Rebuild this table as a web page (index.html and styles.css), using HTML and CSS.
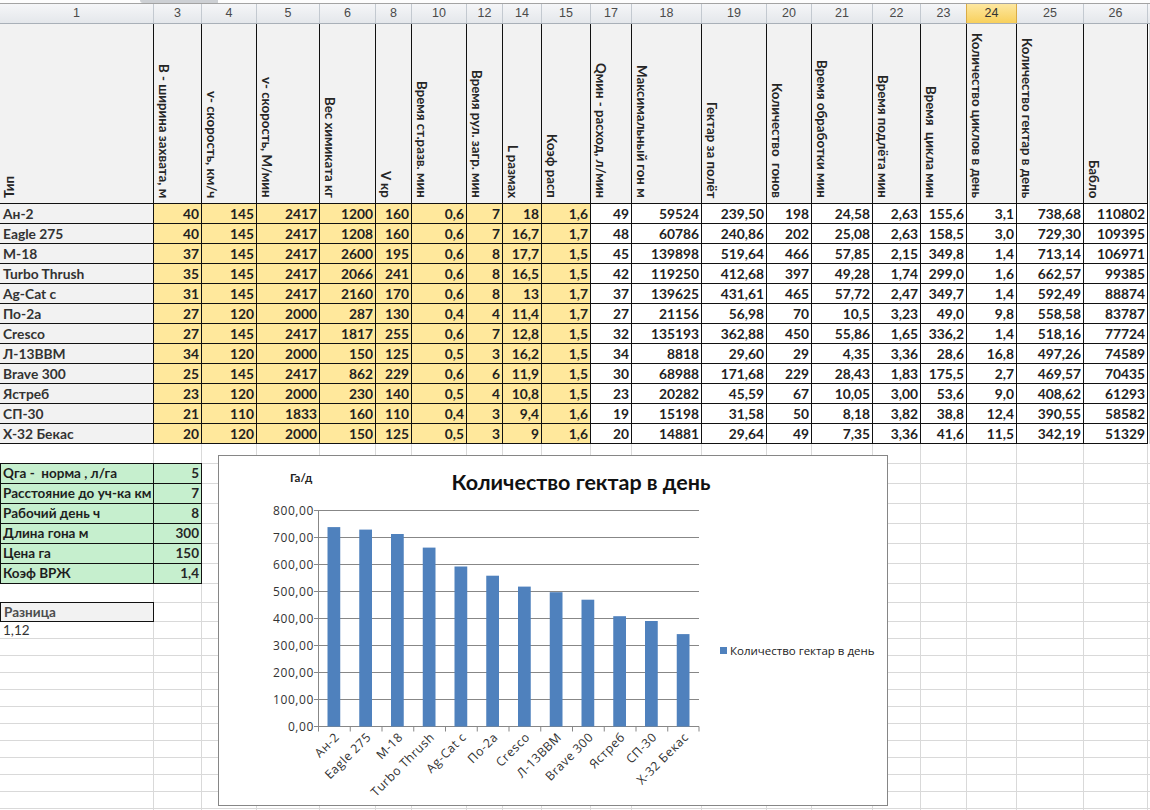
FILE: index.html
```html
<!DOCTYPE html>
<html lang="ru">
<head>
<meta charset="utf-8">
<title>Количество гектар в день</title>
<link rel="stylesheet" href="styles.css">
</head>
<body>
<div class="sheet">
  <div class="topstrip"><div class="tab"></div></div>
  <div class="colhdr">
    <div class="ch">1</div><div class="ch">3</div><div class="ch">4</div><div class="ch">5</div><div class="ch">6</div><div class="ch">8</div><div class="ch">10</div><div class="ch">12</div><div class="ch">14</div><div class="ch">15</div><div class="ch">17</div><div class="ch">18</div><div class="ch">19</div><div class="ch">20</div><div class="ch">21</div><div class="ch">22</div><div class="ch">23</div><div class="ch sel">24</div><div class="ch">25</div><div class="ch">26</div><div class="ch rest"></div>
  </div>
  <div class="upper">
    <div class="tbl">
      <div class="h"><span class="v r">Тип</span></div>
      <div class="h"><span class="v">В - ширина захвата, м</span></div>
      <div class="h"><span class="v">v- скорость, км/ч</span></div>
      <div class="h"><span class="v">v- скорость, М/мин</span></div>
      <div class="h"><span class="v">Вес химиката кг</span></div>
      <div class="h"><span class="v">V кр</span></div>
      <div class="h"><span class="v">Время ст.разв. мин</span></div>
      <div class="h"><span class="v">Время рул. загр. мин</span></div>
      <div class="h"><span class="v">L размах</span></div>
      <div class="h"><span class="v">Коэф расп</span></div>
      <div class="h"><span class="v">Qмин - расход, л/мин</span></div>
      <div class="h"><span class="v">Максимальный гон м</span></div>
      <div class="h"><span class="v">Гектар за полёт</span></div>
      <div class="h"><span class="v">Количество&nbsp; гонов</span></div>
      <div class="h"><span class="v">Время обработки мин</span></div>
      <div class="h"><span class="v">Время подлёта мин</span></div>
      <div class="h"><span class="v">Время&nbsp; цикла мин</span></div>
      <div class="h"><span class="v">Количество циклов в день</span></div>
      <div class="h"><span class="v">Количество гектар в день</span></div>
      <div class="h"><span class="v">Бабло</span></div>

      <div class="n">Ан-2</div><div class="y">40</div><div class="y">145</div><div class="y">2417</div><div class="y">1200</div><div class="y">160</div><div class="y">0,6</div><div class="y">7</div><div class="y">18</div><div class="y">1,6</div><div>49</div><div>59524</div><div>239,50</div><div>198</div><div>24,58</div><div>2,63</div><div>155,6</div><div>3,1</div><div>738,68</div><div>110802</div>
      <div class="n">Eagle 275</div><div class="y">40</div><div class="y">145</div><div class="y">2417</div><div class="y">1208</div><div class="y">160</div><div class="y">0,6</div><div class="y">7</div><div class="y">16,7</div><div class="y">1,7</div><div>48</div><div>60786</div><div>240,86</div><div>202</div><div>25,08</div><div>2,63</div><div>158,5</div><div>3,0</div><div>729,30</div><div>109395</div>
      <div class="n">М-18</div><div class="y">37</div><div class="y">145</div><div class="y">2417</div><div class="y">2600</div><div class="y">195</div><div class="y">0,6</div><div class="y">8</div><div class="y">17,7</div><div class="y">1,5</div><div>45</div><div>139898</div><div>519,64</div><div>466</div><div>57,85</div><div>2,15</div><div>349,8</div><div>1,4</div><div>713,14</div><div>106971</div>
      <div class="n">Turbo Thrush</div><div class="y">35</div><div class="y">145</div><div class="y">2417</div><div class="y">2066</div><div class="y">241</div><div class="y">0,6</div><div class="y">8</div><div class="y">16,5</div><div class="y">1,5</div><div>42</div><div>119250</div><div>412,68</div><div>397</div><div>49,28</div><div>1,74</div><div>299,0</div><div>1,6</div><div>662,57</div><div>99385</div>
      <div class="n">Ag-Cat c</div><div class="y">31</div><div class="y">145</div><div class="y">2417</div><div class="y">2160</div><div class="y">170</div><div class="y">0,6</div><div class="y">8</div><div class="y">13</div><div class="y">1,7</div><div>37</div><div>139625</div><div>431,61</div><div>465</div><div>57,72</div><div>2,47</div><div>349,7</div><div>1,4</div><div>592,49</div><div>88874</div>
      <div class="n">По-2а</div><div class="y">27</div><div class="y">120</div><div class="y">2000</div><div class="y">287</div><div class="y">130</div><div class="y">0,4</div><div class="y">4</div><div class="y">11,4</div><div class="y">1,7</div><div>27</div><div>21156</div><div>56,98</div><div>70</div><div>10,5</div><div>3,23</div><div>49,0</div><div>9,8</div><div>558,58</div><div>83787</div>
      <div class="n">Cresco</div><div class="y">27</div><div class="y">145</div><div class="y">2417</div><div class="y">1817</div><div class="y">255</div><div class="y">0,6</div><div class="y">7</div><div class="y">12,8</div><div class="y">1,5</div><div>32</div><div>135193</div><div>362,88</div><div>450</div><div>55,86</div><div>1,65</div><div>336,2</div><div>1,4</div><div>518,16</div><div>77724</div>
      <div class="n">Л-13ВВМ</div><div class="y">34</div><div class="y">120</div><div class="y">2000</div><div class="y">150</div><div class="y">125</div><div class="y">0,5</div><div class="y">3</div><div class="y">16,2</div><div class="y">1,5</div><div>34</div><div>8818</div><div>29,60</div><div>29</div><div>4,35</div><div>3,36</div><div>28,6</div><div>16,8</div><div>497,26</div><div>74589</div>
      <div class="n">Brave 300</div><div class="y">25</div><div class="y">145</div><div class="y">2417</div><div class="y">862</div><div class="y">229</div><div class="y">0,6</div><div class="y">6</div><div class="y">11,9</div><div class="y">1,5</div><div>30</div><div>68988</div><div>171,68</div><div>229</div><div>28,43</div><div>1,83</div><div>175,5</div><div>2,7</div><div>469,57</div><div>70435</div>
      <div class="n">Ястреб</div><div class="y">23</div><div class="y">120</div><div class="y">2000</div><div class="y">230</div><div class="y">140</div><div class="y">0,5</div><div class="y">4</div><div class="y">10,8</div><div class="y">1,5</div><div>23</div><div>20282</div><div>45,59</div><div>67</div><div>10,05</div><div>3,00</div><div>53,6</div><div>9,0</div><div>408,62</div><div>61293</div>
      <div class="n">СП-30</div><div class="y">21</div><div class="y">110</div><div class="y">1833</div><div class="y">160</div><div class="y">110</div><div class="y">0,4</div><div class="y">3</div><div class="y">9,4</div><div class="y">1,6</div><div>19</div><div>15198</div><div>31,58</div><div>50</div><div>8,18</div><div>3,82</div><div>38,8</div><div>12,4</div><div>390,55</div><div>58582</div>
      <div class="n">Х-32 Бекас</div><div class="y">20</div><div class="y">120</div><div class="y">2000</div><div class="y">150</div><div class="y">125</div><div class="y">0,5</div><div class="y">3</div><div class="y">9</div><div class="y">1,6</div><div>20</div><div>14881</div><div>29,64</div><div>49</div><div>7,35</div><div>3,36</div><div>41,6</div><div>11,5</div><div>342,19</div><div>51329</div>
    </div>
  </div>
  <div class="lower">
    <div class="lrow"><div class="bb"></div><div class="bb"></div></div>
    <div class="lrow"><div class="g gn">Qга -&nbsp; норма , л/га</div><div class="g">5</div></div>
    <div class="lrow"><div class="g gn">Расстояние до уч-ка км</div><div class="g">7</div></div>
    <div class="lrow"><div class="g gn">Рабочий день ч</div><div class="g">8</div></div>
    <div class="lrow"><div class="g gn">Длина гона м</div><div class="g">300</div></div>
    <div class="lrow"><div class="g gn">Цена га</div><div class="g">150</div></div>
    <div class="lrow"><div class="g gn">Коэф ВРЖ</div><div class="g">1,4</div></div>
    <div class="lrow s19"><div class="bb"></div></div>
    <div class="lrow s19"><div class="diff">Разница</div></div>
    <div class="lrow s17"><div class="plain">1,12</div></div>
    <div class="lrow s17"></div><div class="lrow s17"></div><div class="lrow s17"></div><div class="lrow s17"></div><div class="lrow s17"></div>
    <div class="lrow s17"></div><div class="lrow s17"></div><div class="lrow s17"></div><div class="lrow s17"></div><div class="lrow s17"></div>
  </div>

  <svg class="chart" width="670" height="351" viewBox="0 0 670 351" xmlns="http://www.w3.org/2000/svg">
    <rect x="0.5" y="0.5" width="669" height="350" fill="#fff" stroke="#868686"/>
    <text class="ylab-title" x="72" y="27">Га/д</text>
    <text class="ctitle" x="363" y="35" text-anchor="middle">Количество гектар в день</text>
    <g class="grid" stroke="#878787" stroke-width="1">
      <line x1="96" y1="55.5" x2="481" y2="55.5"/>
      <line x1="96" y1="82.5" x2="481" y2="82.5"/>
      <line x1="96" y1="109.5" x2="481" y2="109.5"/>
      <line x1="96" y1="136.5" x2="481" y2="136.5"/>
      <line x1="96" y1="163.5" x2="481" y2="163.5"/>
      <line x1="96" y1="190.5" x2="481" y2="190.5"/>
      <line x1="96" y1="217.5" x2="481" y2="217.5"/>
      <line x1="96" y1="244.5" x2="481" y2="244.5"/>
      <line x1="96" y1="271.5" x2="481" y2="271.5"/>
      <line x1="100.5" y1="55.5" x2="100.5" y2="271.5"/>
      <line x1="100.5" y1="271.5" x2="100.5" y2="276.5"/>
      <line x1="132.25" y1="271.5" x2="132.25" y2="276.5"/>
      <line x1="164" y1="271.5" x2="164" y2="276.5"/>
      <line x1="195.75" y1="271.5" x2="195.75" y2="276.5"/>
      <line x1="227.5" y1="271.5" x2="227.5" y2="276.5"/>
      <line x1="259.25" y1="271.5" x2="259.25" y2="276.5"/>
      <line x1="291" y1="271.5" x2="291" y2="276.5"/>
      <line x1="322.75" y1="271.5" x2="322.75" y2="276.5"/>
      <line x1="354.5" y1="271.5" x2="354.5" y2="276.5"/>
      <line x1="386.25" y1="271.5" x2="386.25" y2="276.5"/>
      <line x1="418" y1="271.5" x2="418" y2="276.5"/>
      <line x1="449.75" y1="271.5" x2="449.75" y2="276.5"/>
      <line x1="481" y1="271.5" x2="481" y2="276.5"/>
    </g>
    <g class="ylabels" text-anchor="end">
      <text x="96" y="60">800,00</text>
      <text x="96" y="87">700,00</text>
      <text x="96" y="114">600,00</text>
      <text x="96" y="141">500,00</text>
      <text x="96" y="168">400,00</text>
      <text x="96" y="195">300,00</text>
      <text x="96" y="222">200,00</text>
      <text x="96" y="249">100,00</text>
      <text x="96" y="276">0,00</text>
    </g>
    <g fill="#4f81bd">
      <rect x="109.5" y="72.1" width="12.75" height="199.4"/>
      <rect x="141.25" y="74.6" width="12.75" height="196.9"/>
      <rect x="173" y="79" width="12.75" height="192.5"/>
      <rect x="204.75" y="92.6" width="12.75" height="178.9"/>
      <rect x="236.5" y="111.5" width="12.75" height="160"/>
      <rect x="268.25" y="120.7" width="12.75" height="150.8"/>
      <rect x="300" y="131.6" width="12.75" height="139.9"/>
      <rect x="331.75" y="137.2" width="12.75" height="134.3"/>
      <rect x="363.5" y="144.7" width="12.75" height="126.8"/>
      <rect x="395.25" y="161.2" width="12.75" height="110.3"/>
      <rect x="427" y="166" width="12.75" height="105.5"/>
      <rect x="458.75" y="179.1" width="12.75" height="92.4"/>
    </g>
    <g class="xlabels" text-anchor="end">
      <text transform="translate(122,283) rotate(-45)">Ан-2</text>
      <text transform="translate(153.75,283) rotate(-45)">Eagle 275</text>
      <text transform="translate(185.5,283) rotate(-45)">М-18</text>
      <text transform="translate(217.25,283) rotate(-45)">Turbo Thrush</text>
      <text transform="translate(249,283) rotate(-45)">Ag-Cat c</text>
      <text transform="translate(280.75,283) rotate(-45)">По-2а</text>
      <text transform="translate(312.5,283) rotate(-45)">Cresco</text>
      <text transform="translate(344.25,283) rotate(-45)">Л-13ВВМ</text>
      <text transform="translate(376,283) rotate(-45)">Brave 300</text>
      <text transform="translate(407.75,283) rotate(-45)">Ястреб</text>
      <text transform="translate(439.5,283) rotate(-45)">СП-30</text>
      <text transform="translate(471.25,283) rotate(-45)">Х-32 Бекас</text>
    </g>
    <rect x="502" y="192" width="7" height="7" fill="#4f81bd"/>
    <text class="legend" x="512" y="200">Количество гектар в день</text>
  </svg>
</div>
</body>
</html>
```
FILE: styles.css
```css
html, body {
  margin: 0;
  padding: 0;
}
body {
  width: 1150px;
  height: 810px;
  overflow: hidden;
  background: #fff;
  font-family: Lato, "Liberation Sans", sans-serif;
  color: #262626;
}
.sheet {
  --cols: 154px 48px 55px 63px 56px 36px 55px 36px 39px 49px 41px 70px 65px 45px 61px 48px 46px 50px 67px 64px;
  position: relative;
  width: 1150px;
  height: 810px;
  overflow: hidden;
}

/* strip above the column headers */
.topstrip {
  height: 3px;
  border-bottom: 1px solid #a3a3a3;
  display: flex;
  background: #fdfdfd;
}
.topstrip .tab {
  margin-left: 140px;
  width: 78px;
  background: #cdd0d4;
  border-bottom-left-radius: 3px;
}

/* column header row */
.colhdr {
  display: grid;
  grid-template-columns: var(--cols) 1fr;
  height: 20px;
  box-sizing: border-box;
  border-bottom: 1px solid #a9b0b8;
  background: linear-gradient(#f5f6f8, #e4e7eb);
}
.ch {
  border-right: 1px solid #c3c9d0;
  text-align: center;
  font-family: "Liberation Sans", Arial, sans-serif;
  font-size: 12.5px;
  line-height: 19px;
  color: #4a4a4a;
}
.ch.sel {
  background: linear-gradient(#fde7a0, #f8d05c);
  border-right-color: #d9ab45;
  border-left: 1px solid #d9ab45;
  margin-left: -1px;
  color: #333;
}
.ch.rest {
  border-right: none;
}

/* main table */
.upper {
  background: linear-gradient(#d9d9d9, #d9d9d9) 1149px 0 / 1px 100% no-repeat;
}
.tbl {
  display: grid;
  grid-template-columns: var(--cols);
  grid-template-rows: 180px repeat(12, 20px);
  width: 1148px;
}
.tbl > div {
  box-sizing: border-box;
  border-right: 1px solid #111;
  border-bottom: 1px solid #111;
  font-weight: 700;
  font-size: 13.8px;
  line-height: 20px;
  padding: 0 2px 0 2px;
  text-align: right;
  white-space: nowrap;
  overflow: hidden;
  background: #fff;
  color: #1f1f1f;
}
.tbl > div.n {
  background: #f2f2f2;
  text-align: left;
  padding-left: 3px;
  color: #333;
}
.tbl > div.y {
  background: #ffe89c;
}
.tbl > div.h {
  background: #f2f2f2;
  display: flex;
  align-items: flex-end;
  justify-content: flex-start;
  padding: 0 0 5px 2px;
}
.v {
  writing-mode: vertical-rl;
  line-height: 15px;
  font-size: 13.3px;
  font-weight: 700;
  white-space: nowrap;
  color: #262626;
}
.v.r {
  transform: rotate(180deg);
}

/* lower area with plain grid lines */
.lower {
  height: 366px;
  background-image:
    linear-gradient(#d9d9d9, #d9d9d9), linear-gradient(#d9d9d9, #d9d9d9), linear-gradient(#d9d9d9, #d9d9d9),
    linear-gradient(#d9d9d9, #d9d9d9), linear-gradient(#d9d9d9, #d9d9d9), linear-gradient(#d9d9d9, #d9d9d9),
    linear-gradient(#d9d9d9, #d9d9d9), linear-gradient(#d9d9d9, #d9d9d9), linear-gradient(#d9d9d9, #d9d9d9),
    linear-gradient(#d9d9d9, #d9d9d9), linear-gradient(#d9d9d9, #d9d9d9), linear-gradient(#d9d9d9, #d9d9d9),
    linear-gradient(#d9d9d9, #d9d9d9), linear-gradient(#d9d9d9, #d9d9d9), linear-gradient(#d9d9d9, #d9d9d9),
    linear-gradient(#d9d9d9, #d9d9d9), linear-gradient(#d9d9d9, #d9d9d9), linear-gradient(#d9d9d9, #d9d9d9),
    linear-gradient(#d9d9d9, #d9d9d9), linear-gradient(#d9d9d9, #d9d9d9);
  background-size: 1px 100%;
  background-repeat: no-repeat;
  background-position:
    153px 0, 201px 0, 256px 0, 319px 0, 375px 0, 411px 0, 466px 0, 502px 0, 541px 0, 590px 0,
    631px 0, 701px 0, 766px 0, 811px 0, 872px 0, 920px 0, 966px 0, 1016px 0, 1083px 0, 1147px 0;
}
.lrow {
  display: grid;
  grid-template-columns: var(--cols) 1fr;
  height: 20px;
  box-sizing: border-box;
  background: linear-gradient(#d9d9d9, #d9d9d9) left bottom / 100% 1px no-repeat;
}
.lrow.s19 { height: 19px; }
.lrow.s17 { height: 17px; }
.lrow > div {
  box-sizing: border-box;
  white-space: nowrap;
  font-size: 13.5px;
  line-height: 19px;
}
.bb {
  border-bottom: 1px solid #111;
}
.g {
  background: #c6efce;
  border-right: 1px solid #111;
  border-bottom: 1px solid #111;
  font-weight: 700;
  text-align: right;
  padding: 0 2px;
  overflow: hidden;
}
.g.gn {
  text-align: left;
  border-left: 1px solid #111;
  padding-left: 2px;
  color: #1e1e1e;
}
.diff {
  background: #f2f2f2;
  border: 1px solid #111;
  border-top: none;
  font-weight: 700;
  color: #4d4d4d;
  padding-left: 3px;
  line-height: 18px !important;
}
.plain {
  color: #333;
  padding-left: 3px;
  line-height: 17px !important;
}

/* chart */
.chart {
  position: absolute;
  left: 218px;
  top: 455px;
  font-family: Lato, "Liberation Sans", sans-serif;
}
.chart .ctitle {
  font-size: 21.5px;
  font-weight: 700;
  fill: #111;
}
.chart .ylab-title {
  font-size: 11.5px;
  font-weight: 700;
  fill: #222;
}
.chart .ylabels text {
  font-family: "Open Sans", Lato, sans-serif;
  font-size: 12px;
  letter-spacing: 0.6px;
  fill: #333;
}
.chart .xlabels text {
  font-family: "Open Sans", Lato, sans-serif;
  font-size: 12.3px;
  letter-spacing: 0.5px;
  fill: #333;
}
.chart .legend {
  font-family: "Open Sans", Lato, sans-serif;
  font-size: 11.5px;
  letter-spacing: 0;
  fill: #222;
}
```
